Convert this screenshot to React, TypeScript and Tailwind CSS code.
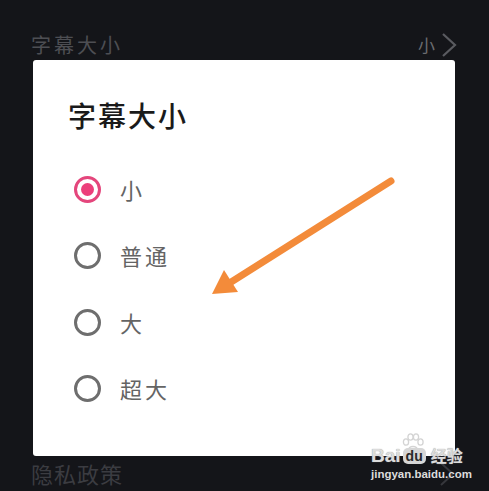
import React from "react";

const font = { fontFamily: '"Noto Sans CJK SC", "Noto Sans", sans-serif' };
const latin = { fontFamily: '"Liberation Sans", Arial, sans-serif' };

function Radio({ checked }: { checked?: boolean }) {
  return checked ? (
    <div className="w-[27px] h-[27px] rounded-full border-[3px] border-[#e4467c] flex items-center justify-center">
      <div className="w-[13px] h-[13px] rounded-full bg-[#ec3f7b]" />
    </div>
  ) : (
    <div className="w-[27px] h-[27px] rounded-full border-[3px] border-[#6e6e6e]" />
  );
}

export default function App() {
  const options = [
    { label: "小", checked: true },
    { label: "普通" },
    { label: "大" },
    { label: "超大" },
  ];
  return (
    <div className="relative w-[489px] h-[491px] bg-[#141519] overflow-hidden flex flex-col" style={font}>
      <div className="mt-[30px] h-[30px] flex items-center justify-between pl-[31px] pr-[32px]">
        <span className="text-[20px] leading-[30px] tracking-[3px] text-[#4d4e53]">字幕大小</span>
        <div className="flex items-center gap-[6px]">
          <span className="text-[17px] text-[#6b6c70]">小</span>
          <svg width="16" height="26" viewBox="0 0 16 26">
            <path d="M2 2 L14 13 L2 24" fill="none" stroke="#5a5b60" strokeWidth="2.2" />
          </svg>
        </div>
      </div>
      <div className="ml-[33px] w-[422px] h-[396px] bg-white rounded-[3px] flex flex-col">
        <div className="h-[96px] pt-[40px] pl-[35px]">
          <span className="text-[28px] leading-[30px] tracking-[2px] font-medium text-[#1a1a1a]">字幕大小</span>
        </div>
        <div className="flex flex-col pl-[41px]">
          {options.map((o) => (
            <div key={o.label} className="h-[66.5px] flex items-center gap-[19px]">
              <Radio checked={o.checked} />
              <span className="text-[22px] tracking-[3px] text-[#646464]">{o.label}</span>
            </div>
          ))}
        </div>
      </div>
      <div className="h-[35px] flex items-center justify-between pl-[31px] pr-[34px]">
        <span className="text-[22px] tracking-[1px] text-[#3b3c41]">隐私政策</span>
        <svg width="16" height="26" viewBox="0 0 16 26">
          <path d="M2 2 L14 13 L2 24" fill="none" stroke="#36373c" strokeWidth="2" />
        </svg>
      </div>

      <svg className="absolute left-0 top-0" width="489" height="491" viewBox="0 0 489 491">
        <line x1="391" y1="181" x2="228" y2="284" stroke="#f38b3a" strokeWidth="7" strokeLinecap="round" />
        <polygon points="212,294 224,270 238,292" fill="#f38b3a" />
      </svg>

      <svg className="absolute left-[402px] top-[433px]" width="22" height="20" viewBox="0 0 22 20">
        <g fill="none" stroke="#d4d4d4" strokeWidth="1.3">
          <ellipse cx="4" cy="9" rx="2.6" ry="3.2" />
          <ellipse cx="8.5" cy="4" rx="2.6" ry="3.2" />
          <ellipse cx="14" cy="4" rx="2.6" ry="3.2" />
          <ellipse cx="18.5" cy="9" rx="2.6" ry="3.2" />
          <path d="M6 18 C6 12 16 12 16 18 Z" />
        </g>
      </svg>

      <div className="absolute left-[371px] top-[446px] flex flex-col items-start">
        <div className="flex items-center gap-[2px] leading-none text-[#dcdcdc]" style={{ textShadow: "0 0 1px #8a8a8a" }}>
          <span className="text-[19px] font-bold leading-[19px]" style={latin}>Bai</span>
          <span className="text-[14px] font-bold rounded-[5px] bg-[#d6d6d6] text-[#2a2a2a] px-[3px] leading-[16px]" style={{ ...latin, textShadow: "none" }}>du</span>
          <span className="text-[16px] font-bold ml-[3px] leading-[19px]">经验</span>
        </div>
        <span className="text-[11.5px] font-bold leading-[14px] mt-[2px] text-[#dcdcdc]" style={latin}>jingyan.baidu.com</span>
      </div>
    </div>
  );
}
